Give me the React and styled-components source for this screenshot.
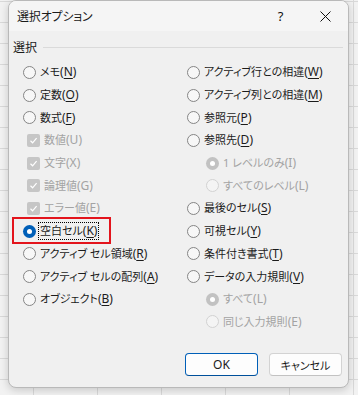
import React from 'react';
import styled, { createGlobalStyle, css } from 'styled-components';

const GlobalStyle = createGlobalStyle`
  html, body {
    margin: 0;
    padding: 0;
  }
  body {
    font-family: "Noto Sans", "Noto Sans CJK JP", sans-serif;
    font-feature-settings: "palt";
    -webkit-font-smoothing: antialiased;
  }
`;

const Sheet = styled.div`
  width: 358px;
  height: 395px;
  overflow: hidden;
  box-sizing: border-box;
  padding: 0 9px 7px 8px;
  background-color: #f2f2f2;
  background-image:
    linear-gradient(to bottom, #d9d9d9 1px, transparent 1px),
    linear-gradient(to right, #d9d9d9 1px, transparent 1px);
  background-size: 100% 21px, 64px 100%;
  background-position: 0 1px, 33px 0;
`;

const Dialog = styled.div`
  height: 388px;
  box-sizing: border-box;
  display: flex;
  flex-direction: column;
  background: #f0f0f0;
  border: 1px solid #b9b9b9;
  border-radius: 8px;
  box-shadow: 0 2px 8px rgba(0, 0, 0, 0.18);
  overflow: hidden;
  color: #1b1b1b;
  font-size: 12px;
`;

const TitleBar = styled.div`
  height: 30px;
  display: flex;
  align-items: center;
  padding-left: 8px;
  background: #f5f5f5;
`;

const Title = styled.div`
  flex: 1;
  font-size: 12px;
  letter-spacing: -0.2px;
`;

const TitleButton = styled.div`
  width: 45px;
  height: 30px;
  display: flex;
  align-items: center;
  justify-content: center;
  font-size: 13px;
  color: #111;
`;

const Body = styled.div`
  flex: 1;
  display: flex;
  flex-direction: column;
`;

const GroupHeader = styled.div`
  height: 20px;
  margin-top: 6px;
  display: flex;
  align-items: center;
  gap: 6px;
  padding: 0 5px 0 4px;
`;

const GroupLabel = styled.span`
  font-size: 12px;
`;

const GroupLine = styled.div`
  flex: 1;
  height: 1px;
  background: #dadada;
`;

const Columns = styled.div`
  display: grid;
  grid-template-columns: 164px 1fr;
  margin-top: 4px;
  padding-left: 14px;
`;

const Column = styled.div`
  display: flex;
  flex-direction: column;
`;

const Row = styled.div`
  position: relative;
  height: 22.7px;
  display: flex;
  align-items: center;
  padding-left: ${p => (p.$indent ? '19px' : '0')};
  color: ${p => (p.$disabled ? '#a3a3a3' : '#1b1b1b')};
  white-space: nowrap;

  ${p => p.$highlight && css`
    &::after {
      content: '';
      position: absolute;
      left: -11px;
      top: -3px;
      width: 99px;
      height: 27px;
      box-sizing: border-box;
      border: 2px solid #e3141c;
      pointer-events: none;
    }
  `}
`;

const RadioMark = styled.span`
  width: 13px;
  height: 13px;
  box-sizing: border-box;
  border-radius: 50%;
  flex: none;
  margin-right: 4px;
  display: flex;
  align-items: center;
  justify-content: center;
  border: 1px solid ${p => (p.$disabled ? '#d2d2d2' : '#858585')};
  background: ${p => (p.$disabled ? '#f4f4f4' : '#f7f7f7')};

  ${p => p.$checked && css`
    border: none;
    background: ${p.$disabled ? '#c2c2c2' : '#005fb8'};
    &::after {
      content: '';
      width: 5px;
      height: 5px;
      border-radius: 50%;
      background: #fff;
    }
  `}
`;

const CheckMark = styled.span`
  width: 13px;
  height: 13px;
  border-radius: 2px;
  background: #c6c6c6;
  flex: none;
  margin-left: 4px;
  margin-right: 4px;
  display: flex;
  align-items: center;
  justify-content: center;
`;

const Label = styled.span`
  line-height: 16px;
  padding: 0 1px;
  margin-left: -1px;
  ${p => p.$focused && css`
    outline: 1px dotted #000;
    outline-offset: 0;
  `}
`;

const JpText = styled.span`
  font-size: 11px;
`;

const Key = styled.span`
  text-decoration: ${p => (p.$disabled ? 'none' : 'underline')};
  text-underline-offset: 2px;
`;

const ButtonRow = styled.div`
  margin-top: auto;
  margin-bottom: 11px;
  display: flex;
  justify-content: flex-end;
  gap: 11px;
  padding-right: 6px;
`;

const Button = styled.div`
  width: 73px;
  height: 23px;
  box-sizing: border-box;
  display: flex;
  align-items: center;
  justify-content: center;
  border-radius: 4px;
  background: #fdfdfd;
  font-size: ${p => (p.$primary ? '12px' : '11px')};
  border: 1px solid ${p => (p.$primary ? '#005fb8' : '#d3d3d3')};
  border-bottom-color: ${p => (p.$primary ? '#00509b' : '#c2c2c2')};
`;

const Check = () => (
  <svg width="9" height="9" viewBox="0 0 9 9">
    <path d="M1.5 4.8 L3.6 6.8 L7.6 2.2" fill="none" stroke="#fff" strokeWidth="1.2" />
  </svg>
);

const Option = ({ type = 'radio', text, k, checked, disabled, indent, focused, highlight }) => (
  <Row $indent={indent} $disabled={disabled} $highlight={highlight}>
    {type === 'check' ? (
      <CheckMark><Check /></CheckMark>
    ) : (
      <RadioMark $checked={checked} $disabled={disabled} />
    )}
    <Label $focused={focused}>
      <JpText>{text}</JpText>(<Key $disabled={disabled}>{k}</Key>)
    </Label>
  </Row>
);

const leftOptions = [
  { text: 'メモ', k: 'N' },
  { text: '定数', k: 'O' },
  { text: '数式', k: 'F' },
  { type: 'check', text: '数値', k: 'U', disabled: true },
  { type: 'check', text: '文字', k: 'X', disabled: true },
  { type: 'check', text: '論理値', k: 'G', disabled: true },
  { type: 'check', text: 'エラー値', k: 'E', disabled: true },
  { text: '空白セル', k: 'K', checked: true, focused: true, highlight: true },
  { text: 'アクティブ セル領域', k: 'R' },
  { text: 'アクティブ セルの配列', k: 'A' },
  { text: 'オブジェクト', k: 'B' },
];

const rightOptions = [
  { text: 'アクティブ行との相違', k: 'W' },
  { text: 'アクティブ列との相違', k: 'M' },
  { text: '参照元', k: 'P' },
  { text: '参照先', k: 'D' },
  { text: '1 レベルのみ', k: 'I', indent: true, disabled: true, checked: true },
  { text: 'すべてのレベル', k: 'L', indent: true, disabled: true },
  { text: '最後のセル', k: 'S' },
  { text: '可視セル', k: 'Y' },
  { text: '条件付き書式', k: 'T' },
  { text: 'データの入力規則', k: 'V' },
  { text: 'すべて', k: 'L', indent: true, disabled: true, checked: true },
  { text: '同じ入力規則', k: 'E', indent: true, disabled: true },
];

export default function App() {
  return (
    <>
      <GlobalStyle />
      <Sheet>
        <Dialog>
          <TitleBar>
            <Title>選択オプション</Title>
            <TitleButton>?</TitleButton>
            <TitleButton>
              <svg width="11" height="11" viewBox="0 0 11 11">
                <path d="M0.5 0.5 L10.5 10.5 M10.5 0.5 L0.5 10.5" stroke="#111" strokeWidth="1" />
              </svg>
            </TitleButton>
          </TitleBar>
          <Body>
            <GroupHeader>
              <GroupLabel>選択</GroupLabel>
              <GroupLine />
            </GroupHeader>
            <Columns>
              <Column>
                {leftOptions.map((o, i) => <Option key={i} {...o} />)}
              </Column>
              <Column>
                {rightOptions.map((o, i) => <Option key={i} {...o} />)}
              </Column>
            </Columns>
            <ButtonRow>
              <Button $primary>OK</Button>
              <Button>キャンセル</Button>
            </ButtonRow>
          </Body>
        </Dialog>
      </Sheet>
    </>
  );
}
